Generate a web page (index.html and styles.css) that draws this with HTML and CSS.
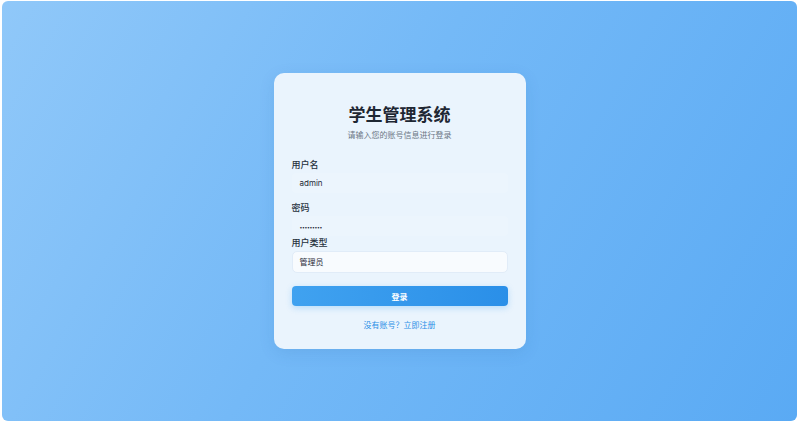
FILE: index.html
```html
<!DOCTYPE html>
<html lang="zh-CN">
<head>
<meta charset="utf-8">
<title>学生管理系统</title>
<link rel="stylesheet" href="styles.css">
</head>
<body>
<div class="screen">
  <div class="card">
    <h1 class="title">学生管理系统</h1>
    <p class="subtitle">请输入您的账号信息进行登录</p>
    <div class="field field-gap">
      <label class="label">用户名</label>
      <div class="input">admin</div>
    </div>
    <div class="field">
      <label class="label">密码</label>
      <div class="input pwd">•••••••••</div>
    </div>
    <div class="field">
      <label class="label">用户类型</label>
      <div class="select">管理员</div>
    </div>
    <button class="btn">登录</button>
    <a class="link">没有账号？立即注册</a>
  </div>
</div>
</body>
</html>
```
FILE: styles.css
```css
html, body {
  margin: 0;
  padding: 0;
  background: #ffffff;
  width: 800px;
  height: 424px;
  overflow: hidden;
  font-family: Inter, "Noto Sans CJK SC", sans-serif;
}
.screen {
  margin: 1px 3px 0 2px;
  height: 420px;
  border-radius: 6px;
  background: linear-gradient(120deg, #90c8f9 0%, #74b9f7 45%, #5aaaf4 100%);
  display: flex;
  justify-content: center;
  align-items: flex-start;
}
.card {
  margin-top: 72px;
  width: 252px;
  box-sizing: border-box;
  padding: 30px 18px 18px;
  background: #eaf4fd;
  border-radius: 10px;
  box-shadow: 0 4px 16px rgba(30, 90, 160, 0.12);
  display: flex;
  flex-direction: column;
}
.title {
  margin: 0;
  font-size: 17px;
  line-height: 24px;
  font-weight: 700;
  color: #1e2733;
  text-align: center;
}
.subtitle {
  margin: 2px 0 0;
  font-size: 8px;
  line-height: 12px;
  color: #6b7684;
  text-align: center;
}
.field {
  display: flex;
  flex-direction: column;
}
.field-gap {
  margin-top: 17px;
  margin-bottom: 8px;
}
.label {
  font-size: 9px;
  line-height: 14px;
  font-weight: 500;
  color: #26303c;
  margin-bottom: 1px;
}
.input {
  height: 20px;
  padding: 0 8px;
  font-size: 8px;
  line-height: 20px;
  color: #1f2937;
  background: rgba(255, 255, 255, 0.12);
  border-radius: 4px;
}
.pwd {
  font-size: 5px;
  letter-spacing: -0.3px;
  line-height: 22px;
}
.select {
  height: 20px;
  padding: 0 7px;
  font-size: 8px;
  line-height: 20px;
  color: #1f2937;
  background: #f8fbfe;
  border: 1px solid #e1ecf8;
  border-radius: 5px;
}
.btn {
  margin-top: 13px;
  height: 20px;
  border: none;
  border-radius: 4px;
  background: linear-gradient(90deg, #40a2f0 0%, #2a8fe8 100%);
  color: #ffffff;
  font-family: Inter, "Noto Sans CJK SC", sans-serif;
  font-size: 8px;
  font-weight: 600;
  box-shadow: 0 2px 6px rgba(33, 150, 243, 0.25);
  padding: 0;
}
.link {
  margin-top: 13px;
  font-size: 8px;
  line-height: 12px;
  color: #2a8fe6;
  text-align: center;
}
```
